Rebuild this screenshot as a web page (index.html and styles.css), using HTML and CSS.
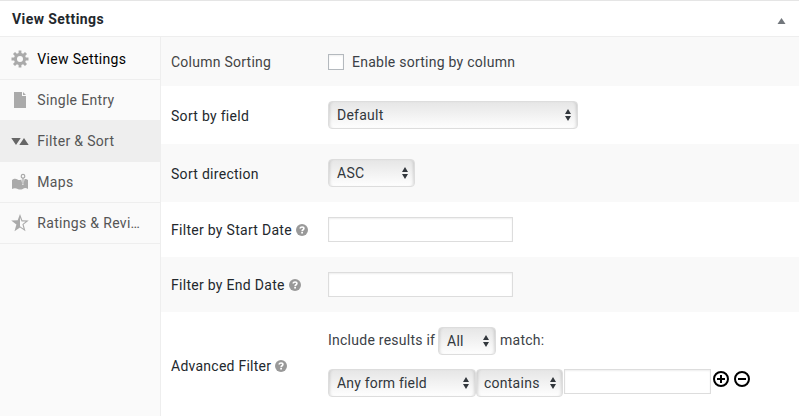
FILE: index.html
```html
<!DOCTYPE html>
<html lang="en">
<head>
<meta charset="utf-8">
<title>View Settings</title>
<link rel="stylesheet" href="styles.css">
</head>
<body>
<svg class="defs" aria-hidden="true">
  <symbol id="arrows" viewBox="0 0 8 14"><path d="M4 1 7 6H1ZM1 8h6L4 13Z"/></symbol>
  <symbol id="help" viewBox="0 0 12 12"><circle cx="6" cy="6" r="6"/><path d="M4.2 4.6C4.2 2.4 7.9 2.5 7.9 4.6 7.9 5.8 6.1 5.7 6.1 7.2" fill="none" stroke="#fff" stroke-width="1.6"/><path d="M5.2 8h1.8v1.6H5.2z" fill="#fff"/></symbol>
</svg>
<div class="panel">
  <header class="title"><h2>View Settings</h2><svg class="toggle" viewBox="0 0 8 6"><path d="M4 0 8 6H0Z"/></svg></header>
  <div class="body">
    <nav class="tabs">
      <a class="tab first"><svg viewBox="0 0 18 18"><path fill-rule="evenodd" d="M7.600.5h2.800v2.600l1.700.7 1.900-1.800 2 2-1.800 1.900.7 1.700h2.600v2.800h-2.600l-.7 1.700L16 14l-2 2-1.900-1.800-1.700.7v2.600H7.600v-2.600l-1.700-.7L4 16l-2-2 1.800-1.900-.7-1.700H.5V7.600h2.600l.7-1.700L2 4l2-2 1.900 1.800 1.700-.7ZM9 6a3 3 0 1 0 0 6 3 3 0 0 0 0-6Z"/></svg><span>View Settings</span></a>
      <a class="tab"><svg viewBox="0 0 18 18"><path d="M3 1h8v4h4v12H3ZM12 1l3 3h-3Z"/></svg><span>Single Entry</span></a>
      <a class="tab active"><svg viewBox="0 0 18 18"><path d="M.3 6h9.400L5 13ZM8.300 13 13 6l4.700 7Z"/></svg><span>Filter &amp; Sort</span></a>
      <a class="tab"><svg viewBox="0 0 18 18"><path d="M1 7c2-1.700 4-1.400 5.500-.6 1.200.7 2.300.7 3.800 0l1.200 5.600h.8l1.200-5.800c1.300-.3 2.400 0 3.500.8v9c-2-1.300-3.700-1.100-5.300-.1-1.600.9-3.300.9-5 0S2.600 15 1 16Z"/><path fill-rule="evenodd" d="M12 .8a2.500 2.500 0 0 0-.6 4.900V11h1.200V5.700A2.500 2.500 0 0 0 12 .8Zm0 1.300a1.200 1.200 0 1 1 0 2.400 1.200 1.200 0 0 1 0-2.400Z"/></svg><span>Maps</span></a>
      <a class="tab"><svg viewBox="0 0 18 18"><path fill-rule="evenodd" d="m9 0 2.300 6.300 6.500.2-5.200 4.100 1.900 6.700L9 13.500l-5.500 3.800 1.900-6.700L.2 6.500l6.500-.2Zm0 3.500v8.700l3.600 2.500-1.200-4.500 3.300-2.600-4.100-.2Z"/></svg><span>Ratings &amp; Revi…</span></a>
    </nav>
    <main class="rows">
      <div class="row r1 odd"><div class="label soft">Column Sorting</div><div class="field"><i class="check"></i><span>Enable sorting by column</span></div></div>
      <div class="row r2"><div class="label">Sort by field</div><div class="field"><div class="select w-sort">Default<svg><use href="#arrows"/></svg></div></div></div>
      <div class="row r2 odd"><div class="label">Sort direction</div><div class="field"><div class="select w-dir">ASC<svg><use href="#arrows"/></svg></div></div></div>
      <div class="row r4"><div class="label">Filter by Start Date<svg class="help"><use href="#help"/></svg></div><div class="field"><div class="input"></div></div></div>
      <div class="row r4 odd"><div class="label">Filter by End Date<svg class="help"><use href="#help"/></svg></div><div class="field"><div class="input"></div></div></div>
      <div class="row r6"><div class="label">Advanced Filter<svg class="help"><use href="#help"/></svg></div>
        <div class="stack">
          <div class="line"><span class="include">Include results if</span><div class="select w-all">All<svg><use href="#arrows"/></svg></div><span class="match">match:</span></div>
          <div class="line cond"><div class="select w-any">Any form field<svg><use href="#arrows"/></svg></div><div class="select w-con">contains<svg><use href="#arrows"/></svg></div><div class="input value"></div>
            <svg class="round" viewBox="0 0 16 16"><circle cx="8" cy="8" r="7"/><path d="M8 4v8M4 8h8"/></svg><svg class="round minus" viewBox="0 0 16 16"><circle cx="8" cy="8" r="7"/><path d="M4 8h8"/></svg></div>
        </div>
      </div>
    </main>
  </div>
</div>
</body>
</html>
```
FILE: styles.css
```css
* { box-sizing: border-box; }
body { margin: 0; background: #fff; color: #3c4146; font: 14px/20px Roboto, "Liberation Sans", sans-serif; letter-spacing: .25px; overflow: hidden; }
.defs { position: absolute; width: 0; height: 0; }
.panel { width: 799px; height: 416px; border-top: 1px solid #e5e5e5; display: flex; flex-direction: column; }
.title { height: 36px; border-bottom: 1px solid #eee; display: flex; align-items: center; justify-content: space-between; padding: 0 13px 0 12px; }
.title h2 { margin: 0; font-size: 14px; line-height: 20px; font-weight: 700; color: #23282d; letter-spacing: .43px; }
.toggle { width: 9px; height: 6px; fill: #72777c; margin-top: 4px; }
.body { display: flex; flex: 1; min-height: 0; }
.tabs { width: 161px; background: #fafafa; border-right: 1px solid #eee; letter-spacing: .32px; }
.tab { height: 41px; border-bottom: 1px solid #eee; display: flex; align-items: center; padding: 0 10px 0 11px; color: #555; }
.tab.first { height: 43px; color: #000; padding-top: 2px; }
.tab.active { background: #eee; box-shadow: 0 -1px #eee; }
.tab svg { width: 18px; height: 18px; flex: none; fill: #aaa; margin-right: 8.3px; }
.tab.active svg { fill: #666; }
.tab span { white-space: nowrap; }
.rows { flex: 1; }
.row { display: flex; align-items: center; padding-left: 10px; }
.odd { background: #f9f9f9; }
.r1 { height: 49px; }
.r2 { height: 58px; }
.r4 { height: 55px; }
.r6 { height: 104px; }
.label { width: 157px; color: #23282d; display: flex; align-items: center; white-space: nowrap; letter-spacing: .29px; }
.r2 .label { padding-top: 2px; }
.r6 .label { padding-top: 4px; letter-spacing: .25px; }
.label.soft { color: #444; letter-spacing: .25px; }
.help { width: 12px; height: 12px; fill: #999; margin-left: 4px; }
.field { display: flex; align-items: center; }
.check { width: 16px; height: 16px; border: 1px solid #b4b9be; background: #fff; box-shadow: inset 0 1px 2px #0001; margin-right: 8px; }
.select { height: 28px; border: 1px solid #ddd; border-radius: 4px; background: linear-gradient(#e6e6e6, #fefefe); box-shadow: inset 3px 0 3px -2px #0002, inset -3px 0 3px -2px #0002; color: #32373c; display: flex; align-items: center; justify-content: space-between; padding: 0 5px 0 8px; white-space: nowrap; }
.select svg { width: 8px; height: 14px; fill: #32373c; flex: none; }
.w-sort { width: 250px; }
.w-dir { width: 87px; }
.w-all { width: 58px; margin: 0 4px; }
.w-any { width: 148px; letter-spacing: .18px; }
.w-con { width: 87px; padding-left: 7px; }
.input { width: 185px; height: 25px; border: 1px solid #ddd; background: #fff; box-shadow: inset 0 1px 2px #00000012; }
.stack { display: flex; flex-direction: column; gap: 14px; padding-bottom: 5px; }
.line { display: flex; align-items: center; height: 28px; white-space: nowrap; }
.include { width: 106px; }
.include, .match { padding-bottom: 2px; }
.cond { align-items: flex-start; }
.value { width: 147px; margin-left: 1px; }
.round { width: 16px; height: 16px; margin: 2px 0 0 2px; fill: none; stroke: #000; stroke-width: 2; }
.minus { margin-left: 5px; }
```
